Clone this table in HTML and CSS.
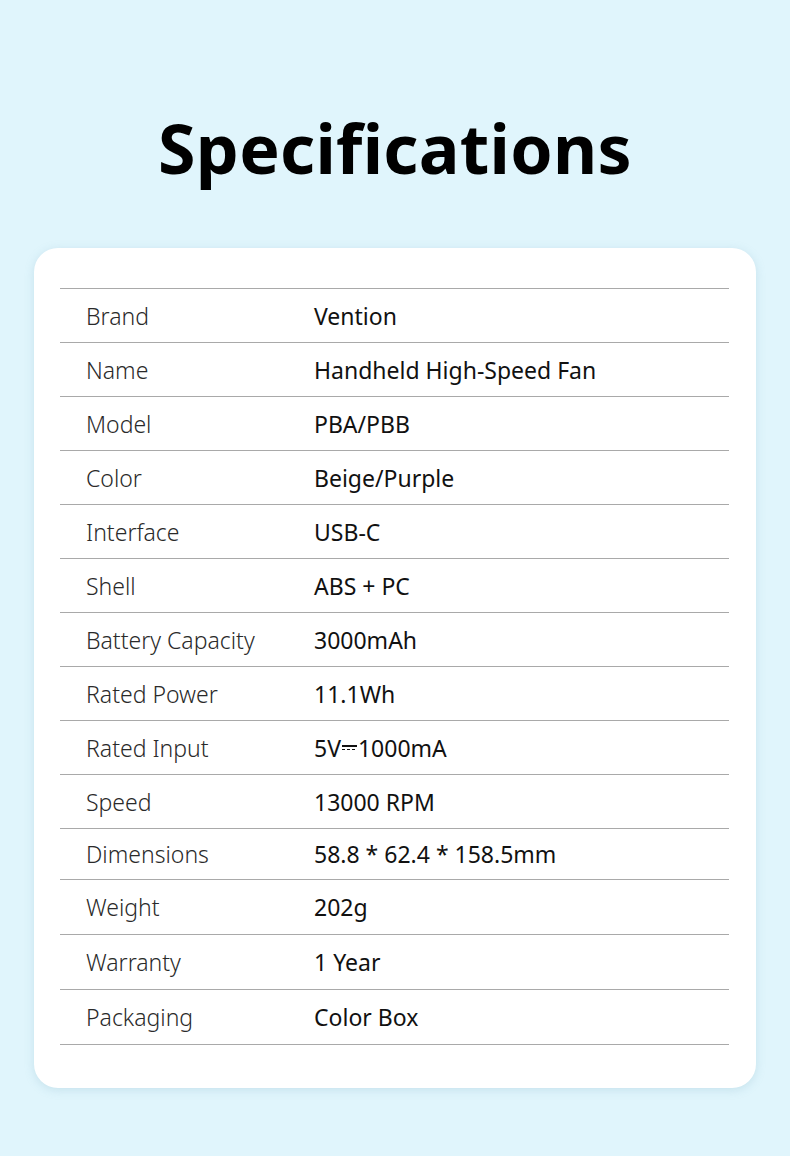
FILE: index.html
```html
<!DOCTYPE html>
<html>
<head>
<meta charset="utf-8">
<link rel="stylesheet" href="styles.css">
</head>
<body>
<div class="page">
  <h1 class="title">Specifications</h1>
  <div class="card">
    <div class="table">
      <div class="row"><span class="label">Brand</span><span class="value">Vention</span></div>
      <div class="row"><span class="label">Name</span><span class="value">Handheld High-Speed Fan</span></div>
      <div class="row"><span class="label">Model</span><span class="value">PBA/PBB</span></div>
      <div class="row"><span class="label">Color</span><span class="value">Beige/Purple</span></div>
      <div class="row"><span class="label">Interface</span><span class="value">USB-C</span></div>
      <div class="row"><span class="label">Shell</span><span class="value">ABS + PC</span></div>
      <div class="row"><span class="label">Battery Capacity</span><span class="value">3000mAh</span></div>
      <div class="row"><span class="label">Rated Power</span><span class="value">11.1Wh</span></div>
      <div class="row"><span class="label">Rated Input</span><span class="value">5V<span class="dc"><span class="dc-top"></span><span class="dc-bot"></span></span>1000mA</span></div>
      <div class="row"><span class="label">Speed</span><span class="value">13000 RPM</span></div>
      <div class="row short"><span class="label">Dimensions</span><span class="value">58.8 * 62.4 * 158.5mm</span></div>
      <div class="row tall"><span class="label">Weight</span><span class="value">202g</span></div>
      <div class="row tall"><span class="label">Warranty</span><span class="value">1 Year</span></div>
      <div class="row tall"><span class="label">Packaging</span><span class="value">Color Box</span></div>
    </div>
  </div>
</div>
</body>
</html>
```
FILE: styles.css
```css
html, body {
  margin: 0;
  padding: 0;
}
body {
  background: #e0f5fc;
  width: 790px;
  height: 1156px;
  overflow: hidden;
  font-family: "Noto Sans", "Liberation Sans", sans-serif;
  color: #1a1a1a;
}
.page {
  display: flex;
  flex-direction: column;
  align-items: center;
}
.title {
  margin: 104px 0 0 0;
  height: 144px;
  font-family: "Noto Sans", sans-serif;
  font-weight: 700;
  font-size: 68px;
  line-height: 88px;
  color: #000;
  letter-spacing: 0.3px;
}
.card {
  width: 722px;
  height: 840px;
  box-sizing: border-box;
  background: #fff;
  border-radius: 24px;
  box-shadow: 0 2px 10px rgba(120, 170, 190, 0.25);
  padding: 40px 27px 0 26px;
}
.table {
  border-top: 1px solid #a9a9a9;
}
.row {
  height: 53px;
  border-bottom: 1px solid #a9a9a9;
  display: flex;
  align-items: center;
  font-size: 23px;
}
.row.short {
  height: 50px;
}
.row.tall {
  height: 54px;
}
.label {
  width: 228px;
  padding-left: 26px;
  font-weight: 300;
  color: #2a2a2a;
}
.value {
  font-weight: 400;
  color: #111;
  display: inline-flex;
  align-items: center;
}
.dc {
  display: inline-flex;
  flex-direction: column;
  gap: 2px;
  width: 15px;
  margin: 0 1px;
}
.dc-top {
  height: 1.5px;
  background: #111;
}
.dc-bot {
  height: 1.5px;
  background: repeating-linear-gradient(90deg, #111 0 3px, transparent 3px 5px);
}
```
